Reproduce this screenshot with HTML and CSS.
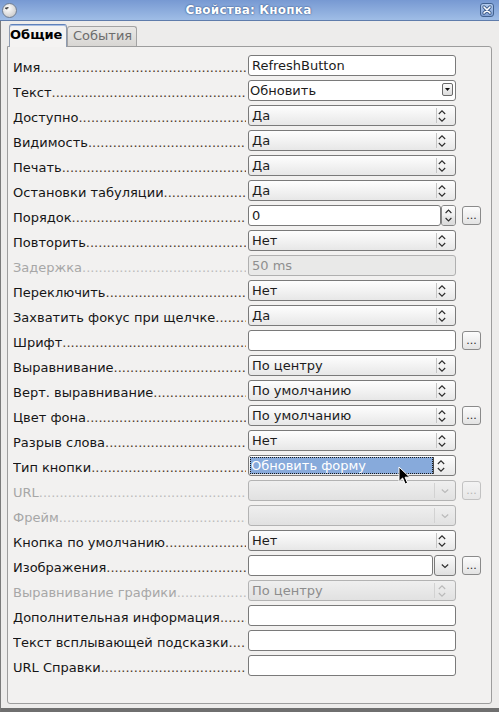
FILE: index.html
```html
<!DOCTYPE html>
<html lang="ru">
<head>
<meta charset="utf-8">
<title>Свойства: Кнопка</title>
<link rel="stylesheet" href="styles.css">
</head>
<body>
<div class="window">
  <div class="titlebar">
    <span class="appicon"><svg width="15" height="15" viewBox="0 0 15 15"><defs><radialGradient id="g" cx="0.4" cy="0.35" r="0.7"><stop offset="0" stop-color="#ffffff"/><stop offset="1" stop-color="#c9c9c9"/></radialGradient></defs><circle cx="7.5" cy="7.5" r="7" fill="url(#g)" stroke="#6d7c92" stroke-width="1"/><path d="M3 5.2 L6.5 4.6 M5.2 4.8 L4.6 6.4" stroke="#333" stroke-width="1.1" fill="none"/></svg></span>
    <span class="title">Свойства: Кнопка</span>
    <span class="close"><svg width="14" height="14" viewBox="0 0 14 14"><path d="M4 4 L10 10 M10 4 L4 10" stroke="#3b5a88" stroke-width="3.2" stroke-linecap="round"/><path d="M4 4 L10 10 M10 4 L4 10" stroke="#ffffff" stroke-width="1.6" stroke-linecap="round"/></svg></span>
  </div>
  <div class="client">
    <div class="tabs">
      <div class="tab active">Общие</div>
      <div class="tab">События</div>
    </div>
    <div class="panel">
      <div class="row"><span class="lbl">Имя</span><div class="ctl txt">RefreshButton</div></div>
      <div class="row"><span class="lbl">Текст</span><div class="ctl txt dd"><span class="val">Обновить</span><span class="ddbtn"><svg width="5" height="3" viewBox="0 0 5 3"><path d="M0 0H5L2.5 3Z" fill="#111"/></svg></span></div></div>
      <div class="row"><span class="lbl">Доступно</span><div class="ctl spin"><span class="val">Да</span><span class="arr"><svg width="8" height="14" viewBox="0 0 8 14"><path d="M0.8 5 L4 1.8 L7.2 5 M0.8 9 L4 12.2 L7.2 9" fill="none" stroke="#2b2b2b" stroke-width="1.1"/></svg></span></div></div>
      <div class="row"><span class="lbl">Видимость</span><div class="ctl spin"><span class="val">Да</span><span class="arr"><svg width="8" height="14" viewBox="0 0 8 14"><path d="M0.8 5 L4 1.8 L7.2 5 M0.8 9 L4 12.2 L7.2 9" fill="none" stroke="#2b2b2b" stroke-width="1.1"/></svg></span></div></div>
      <div class="row"><span class="lbl">Печать</span><div class="ctl spin"><span class="val">Да</span><span class="arr"><svg width="8" height="14" viewBox="0 0 8 14"><path d="M0.8 5 L4 1.8 L7.2 5 M0.8 9 L4 12.2 L7.2 9" fill="none" stroke="#2b2b2b" stroke-width="1.1"/></svg></span></div></div>
      <div class="row"><span class="lbl">Остановки табуляции</span><div class="ctl spin"><span class="val">Да</span><span class="arr"><svg width="8" height="14" viewBox="0 0 8 14"><path d="M0.8 5 L4 1.8 L7.2 5 M0.8 9 L4 12.2 L7.2 9" fill="none" stroke="#2b2b2b" stroke-width="1.1"/></svg></span></div></div>
      <div class="row"><span class="lbl">Порядок</span><div class="ctl num"><span class="txt numval">0</span><span class="numspin"><span class="half up"><svg width="7" height="5" viewBox="0 0 7 5"><path d="M0.6 4 L3.5 1 L6.4 4" fill="none" stroke="#2b2b2b" stroke-width="1.1"/></svg></span><span class="half down"><svg width="7" height="5" viewBox="0 0 7 5"><path d="M0.6 1 L3.5 4 L6.4 1" fill="none" stroke="#2b2b2b" stroke-width="1.1"/></svg></span></span></div><span class="more">...</span></div>
      <div class="row"><span class="lbl">Повторить</span><div class="ctl spin"><span class="val">Нет</span><span class="arr"><svg width="8" height="14" viewBox="0 0 8 14"><path d="M0.8 5 L4 1.8 L7.2 5 M0.8 9 L4 12.2 L7.2 9" fill="none" stroke="#2b2b2b" stroke-width="1.1"/></svg></span></div></div>
      <div class="row"><span class="lbl off">Задержка</span><div class="ctl txt dis">50 ms</div></div>
      <div class="row"><span class="lbl">Переключить</span><div class="ctl spin"><span class="val">Нет</span><span class="arr"><svg width="8" height="14" viewBox="0 0 8 14"><path d="M0.8 5 L4 1.8 L7.2 5 M0.8 9 L4 12.2 L7.2 9" fill="none" stroke="#2b2b2b" stroke-width="1.1"/></svg></span></div></div>
      <div class="row"><span class="lbl">Захватить фокус при щелчке</span><div class="ctl spin"><span class="val">Да</span><span class="arr"><svg width="8" height="14" viewBox="0 0 8 14"><path d="M0.8 5 L4 1.8 L7.2 5 M0.8 9 L4 12.2 L7.2 9" fill="none" stroke="#2b2b2b" stroke-width="1.1"/></svg></span></div></div>
      <div class="row"><span class="lbl">Шрифт</span><div class="ctl txt"></div><span class="more">...</span></div>
      <div class="row"><span class="lbl">Выравнивание</span><div class="ctl spin"><span class="val">По центру</span><span class="arr"><svg width="8" height="14" viewBox="0 0 8 14"><path d="M0.8 5 L4 1.8 L7.2 5 M0.8 9 L4 12.2 L7.2 9" fill="none" stroke="#2b2b2b" stroke-width="1.1"/></svg></span></div></div>
      <div class="row"><span class="lbl">Верт. выравнивание</span><div class="ctl spin"><span class="val">По умолчанию</span><span class="arr"><svg width="8" height="14" viewBox="0 0 8 14"><path d="M0.8 5 L4 1.8 L7.2 5 M0.8 9 L4 12.2 L7.2 9" fill="none" stroke="#2b2b2b" stroke-width="1.1"/></svg></span></div></div>
      <div class="row"><span class="lbl">Цвет фона</span><div class="ctl spin"><span class="val">По умолчанию</span><span class="arr"><svg width="8" height="14" viewBox="0 0 8 14"><path d="M0.8 5 L4 1.8 L7.2 5 M0.8 9 L4 12.2 L7.2 9" fill="none" stroke="#2b2b2b" stroke-width="1.1"/></svg></span></div><span class="more">...</span></div>
      <div class="row"><span class="lbl">Разрыв слова</span><div class="ctl spin"><span class="val">Нет</span><span class="arr"><svg width="8" height="14" viewBox="0 0 8 14"><path d="M0.8 5 L4 1.8 L7.2 5 M0.8 9 L4 12.2 L7.2 9" fill="none" stroke="#2b2b2b" stroke-width="1.1"/></svg></span></div></div>
      <div class="row"><span class="lbl">Тип кнопки</span><div class="ctl spin sel"><span class="val">Обновить форму</span><span class="arr"><svg width="8" height="14" viewBox="0 0 8 14"><path d="M0.8 5 L4 1.8 L7.2 5 M0.8 9 L4 12.2 L7.2 9" fill="none" stroke="#2b2b2b" stroke-width="1.1"/></svg></span></div></div>
      <div class="row"><span class="lbl off">URL</span><div class="ctl spin dis combo"><span class="val"></span><span class="arr"><svg width="8" height="6" viewBox="0 0 8 6"><path d="M0.8 1.5 L4 4.5 L7.2 1.5" fill="none" stroke="#b9b9b9" stroke-width="1.1"/></svg></span></div><span class="more off">...</span></div>
      <div class="row"><span class="lbl off">Фрейм</span><div class="ctl spin dis combo"><span class="val"></span><span class="arr"><svg width="8" height="6" viewBox="0 0 8 6"><path d="M0.8 1.5 L4 4.5 L7.2 1.5" fill="none" stroke="#b9b9b9" stroke-width="1.1"/></svg></span></div></div>
      <div class="row"><span class="lbl">Кнопка по умолчанию</span><div class="ctl spin"><span class="val">Нет</span><span class="arr"><svg width="8" height="14" viewBox="0 0 8 14"><path d="M0.8 5 L4 1.8 L7.2 5 M0.8 9 L4 12.2 L7.2 9" fill="none" stroke="#2b2b2b" stroke-width="1.1"/></svg></span></div></div>
      <div class="row"><span class="lbl">Изображения</span><div class="ctl img"><span class="txt imgval"></span><span class="imgbtn"><svg width="8" height="6" viewBox="0 0 8 6"><path d="M0.8 1.5 L4 4.5 L7.2 1.5" fill="none" stroke="#2b2b2b" stroke-width="1.1"/></svg></span></div><span class="more">...</span></div>
      <div class="row"><span class="lbl off">Выравнивание графики</span><div class="ctl spin dis"><span class="val">По центру</span><span class="arr"><svg width="8" height="14" viewBox="0 0 8 14"><path d="M0.8 5 L4 1.8 L7.2 5 M0.8 9 L4 12.2 L7.2 9" fill="none" stroke="#b9b9b9" stroke-width="1.1"/></svg></span></div></div>
      <div class="row"><span class="lbl">Дополнительная информация</span><div class="ctl txt"></div></div>
      <div class="row"><span class="lbl">Текст всплывающей подсказки</span><div class="ctl txt"></div></div>
      <div class="row"><span class="lbl">URL Справки</span><div class="ctl txt"></div></div>
    </div>
  </div>
</div>
<svg class="cursor" width="13" height="20" viewBox="0 0 13 20"><path d="M1 1 L1 15.5 L4.6 12 L7.2 18 L9.6 17 L7.1 11.2 L11.8 11.2 Z" fill="#000" stroke="#fff" stroke-width="1" stroke-linejoin="round"/></svg>
</body>
</html>
```
FILE: styles.css
```css
* { box-sizing: border-box; }
html, body { margin: 0; padding: 0; }
body {
  width: 499px;
  height: 712px;
  overflow: hidden;
  position: relative;
  background: #edeceb;
  font-family: "DejaVu Sans", "Noto Sans", sans-serif;
  font-size: 13px;
  color: #1c1c1c;
}
.window { height: 712px; display: flex; flex-direction: column; }

.titlebar {
  flex: none;
  height: 21px;
  display: flex;
  align-items: center;
  justify-content: space-between;
  padding: 0 5px 0 2px;
  background: linear-gradient(#7799d2, #9fbde6);
  border-bottom: 1px solid #5f7cab;
}
.appicon { width: 15px; height: 15px; display: flex; }
.title {
  color: #ffffff;
  font-weight: bold;
  font-size: 12px;
  letter-spacing: 0.2px;
  text-shadow: 0 0 2px #3a5a8c, 0 0 1px #3a5a8c;
}
.close {
  width: 14px; height: 14px;
  display: flex;
  border: 1px solid #41618f;
  border-radius: 3px;
  background: linear-gradient(#b2caec, #7f9fd3);
  overflow: hidden;
}
.close svg { margin: -1px; }

.client {
  flex: 1;
  display: flex;
  flex-direction: column;
  border-left: 1px solid #7a7a7a;
  border-bottom: 4px solid #6f6f6f;
  padding: 3px 7px 4px 6px;
}

.tabs {
  flex: none;
  height: 22px;
  display: flex;
  align-items: flex-end;
  margin-left: 2px;
  position: relative;
  z-index: 1;
}
.tab {
  height: 20px;
  width: 70px;
  padding: 0 0 2px 5px;
  line-height: 17px;
  color: #6c6c6c;
  border: 1px solid #a3a3a3;
  border-bottom: none;
  border-radius: 3px 3px 0 0;
  background: linear-gradient(#e9e8e6, #d8d6d3);
  white-space: nowrap;
}
.tab.active {
  height: 23px;
  width: 58px;
  margin-bottom: -1px;
  padding: 0 0 2px 0;
  line-height: 20px;
  font-weight: bold;
  color: #000;
  background: #f4f3f2;
  border-color: #8e9bb0;
  border-top-color: #5f81ba;
  box-shadow: inset 0 1px 0 #a9bfe2;
}

.panel {
  flex: 1;
  display: flex;
  flex-direction: column;
  gap: 4px;
  padding: 8px 0 0 5px;
  background: #f2f1f0;
  border: 1px solid #9d9d9d;
  border-radius: 0 3px 3px 3px;
}

.row { display: flex; height: 21px; }
.lbl {
  flex: none;
  width: 233px;
  margin-right: 2px;
  height: 21px;
  line-height: 25px;
  overflow: hidden;
  white-space: nowrap;
  color: #161616;
}
.lbl::after {
  content: "..............................................................................";
  color: #4e3a28;
}
.lbl.off { color: #a7a7a7; }
.lbl.off::after { color: #bcbcbc; }

.ctl { flex: none; width: 208px; height: 21px; }

.txt {
  border: 1px solid #7a7a7a;
  border-radius: 3px;
  background: #ffffff;
  padding-left: 3px;
  line-height: 19px;
  white-space: nowrap;
  overflow: hidden;
}
.txt.dis {
  background: #e9e9e8;
  border-color: #b0b0b0;
  color: #8f8f8f;
}

.dd { display: flex; padding-left: 0; }
.dd .val { flex: 1; padding-left: 1px; }
.ddbtn {
  width: 11px; height: 13px;
  margin: 2px 2px 0 0;
  border: 1px solid #6a6a6a;
  border-radius: 2px;
  background: linear-gradient(#fbfbfb, #dcdcdc);
  display: flex;
  align-items: center;
  justify-content: center;
}

.spin {
  display: flex;
  border: 1px solid #7a7a7a;
  border-radius: 3px;
  background: linear-gradient(#fefefe, #e7e7e7);
  overflow: hidden;
}
.spin .val {
  flex: 1;
  padding-left: 3px;
  line-height: 19px;
  white-space: nowrap;
  overflow: hidden;
}
.spin .arr {
  flex: none;
  width: 19px;
  margin: 2px 0;
  padding-left: 1px;
  border-left: 1px solid #c4c4c4;
  display: flex;
  align-items: center;
}
.spin.sel .val {
  margin: 1px 0 1px 1px;
  padding-left: 1px;
  line-height: 17px;
  background: #87aadb;
  color: #ffffff;
  outline: 1px dotted #1a1a1a;
  outline-offset: -1px;
}
.spin.sel .arr { width: 22px; padding-left: 3px; border-left-color: #4a4a4a; margin: 1px 0; }
.spin.dis {
  border-color: #b3b3b3;
  background: linear-gradient(#efefef, #e1e1e1);
  color: #8d8d8d;
}
.spin.dis .arr { width: 21px; padding-left: 3px; border-left-color: #d2d2d2; }
.spin.combo .arr { justify-content: center; padding-left: 0; }

.num { display: flex; }
.numval { width: 193px; flex: none; }
.numspin {
  width: 15px;
  flex: none;
  display: flex;
  flex-direction: column;
  border: 1px solid #858585;
  border-radius: 3px;
  overflow: hidden;
}
.half { flex: 1; display: flex; align-items: center; justify-content: center; }
.half.up { background: linear-gradient(#fdfdfd, #efefef); padding-top: 1px; }
.half.down { background: linear-gradient(#e9e9e9, #d9d9d9); padding-bottom: 1px; }

.img { display: flex; gap: 1px; }
.imgval { width: 185px; flex: none; }
.imgbtn {
  flex: 1;
  border: 1px solid #7a7a7a;
  border-radius: 3px;
  background: linear-gradient(#fbfbfb, #e0e0e0);
  display: flex;
  align-items: center;
  justify-content: center;
}

.more {
  flex: none;
  width: 19px;
  height: 19px;
  margin: 1px 0 0 6px;
  border: 1px solid #8a8a8a;
  border-radius: 3px;
  background: linear-gradient(#fcfcfc, #e3e3e3);
  font-size: 11px;
  line-height: 17px;
  text-align: center;
  color: #2a2a2a;
}
.more.off { border-color: #c2c2c2; color: #b5b5b5; background: linear-gradient(#f3f3f3, #e7e7e7); }

.cursor { position: absolute; left: 398px; top: 466px; }
```
